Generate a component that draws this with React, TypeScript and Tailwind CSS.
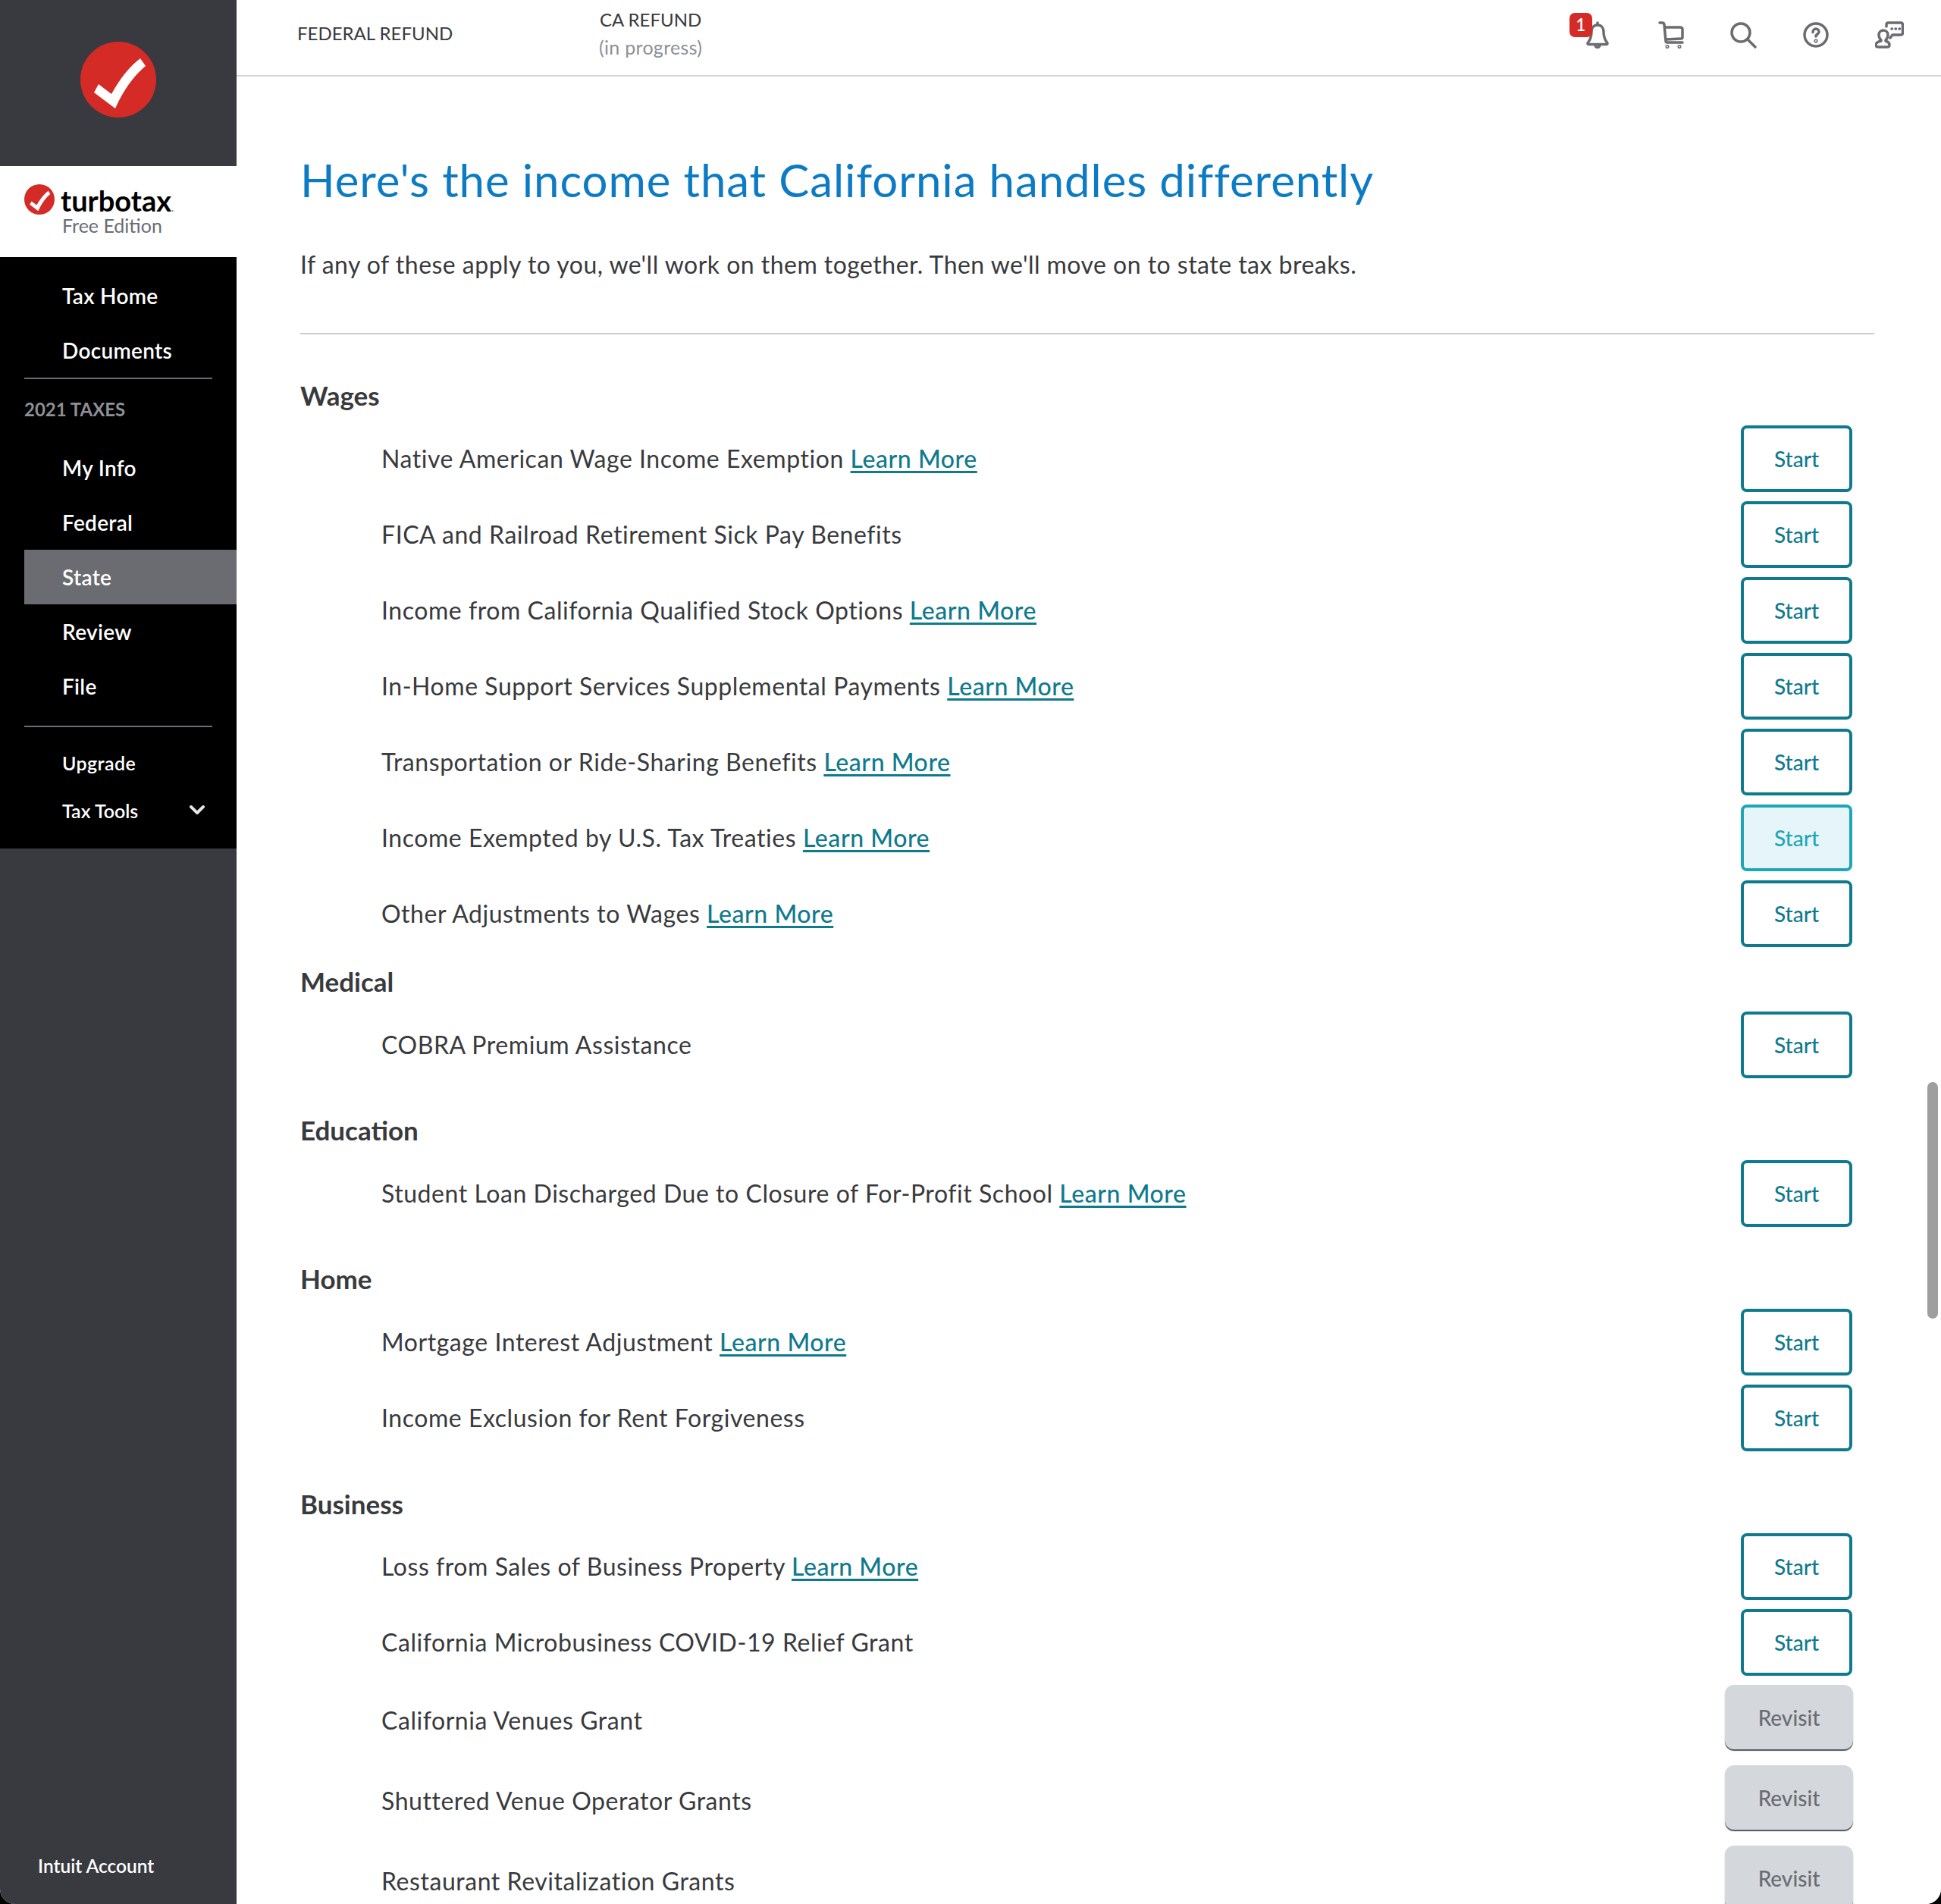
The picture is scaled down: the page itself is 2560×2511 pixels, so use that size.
import { ChevronDown } from 'lucide-react';

const font = "font-['Lato','Noto_Sans',sans-serif]";

type Row = { label: string; learn?: boolean; hover?: boolean; revisit?: boolean };

const sections: { title: string; top: string; gap: string; rows: Row[] }[] = [
  {
    title: 'Wages',
    top: 'mt-[61px]',
    gap: 'mt-[19px]',
    rows: [
      { label: 'Native American Wage Income Exemption', learn: true },
      { label: 'FICA and Railroad Retirement Sick Pay Benefits' },
      { label: 'Income from California Qualified Stock Options', learn: true },
      { label: 'In-Home Support Services Supplemental Payments', learn: true },
      { label: 'Transportation or Ride-Sharing Benefits', learn: true },
      { label: 'Income Exempted by U.S. Tax Treaties', learn: true, hover: true },
      { label: 'Other Adjustments to Wages', learn: true },
    ],
  },
  {
    title: 'Medical',
    top: 'mt-[26px]',
    gap: 'mt-[19px]',
    rows: [{ label: 'COBRA Premium Assistance' }],
  },
  {
    title: 'Education',
    top: 'mt-[49px]',
    gap: 'mt-[19px]',
    rows: [{ label: 'Student Loan Discharged Due to Closure of For-Profit School', learn: true }],
  },
  {
    title: 'Home',
    top: 'mt-[49px]',
    gap: 'mt-[19px]',
    rows: [
      { label: 'Mortgage Interest Adjustment', learn: true },
      { label: 'Income Exclusion for Rent Forgiveness' },
    ],
  },
  {
    title: 'Business',
    top: 'mt-[50px]',
    gap: 'mt-[18px]',
    rows: [
      { label: 'Loss from Sales of Business Property', learn: true },
      { label: 'California Microbusiness COVID-19 Relief Grant' },
      { label: 'California Venues Grant', revisit: true },
      { label: 'Shuttered Venue Operator Grants', revisit: true },
      { label: 'Restaurant Revitalization Grants', revisit: true },
    ],
  },
];

function NavItem({ label, active }: { label: string; active?: boolean }) {
  return (
    <div
      className={`h-[72px] ml-[32px] pl-[50px] flex items-center text-[28px] font-semibold tracking-[0.3px] text-white ${
        active ? 'bg-[#6b6c72]' : ''
      }`}
    >
      {label}
    </div>
  );
}

function Check({ className }: { className: string }) {
  return (
    <svg viewBox="0 0 100 100" className={className}>
      <circle cx="50" cy="50" r="50" fill="#d52b26" />
      <path d="M18 67 L24 56 L41 69 Q58 38 79 22 L86 32 Q62 52 46 88 Z" fill="#fff" />
    </svg>
  );
}

function Sidebar() {
  return (
    <aside className="w-[312px] shrink-0 flex flex-col bg-[#393a3f]">
      {/* Brand */}
      <div className="h-[219px] flex items-center justify-center pb-[9px]">
        <Check className="w-[100px] h-[100px]" />
      </div>
      <div className="h-[120px] bg-white pl-[32px] pt-[24px] flex">
        <Check className="w-[40px] h-[40px]" />
        <div className="ml-[8px]">
          <div className="text-[38px] leading-[42px] font-bold text-black">
            turbotax<span className="text-[#8d9096] text-[14px] leading-none">.</span>
          </div>
          <div className="ml-[2px] -mt-[3px] text-[25px] leading-[30px] text-[#6b6c72]">Free Edition</div>
        </div>
      </div>

      {/* Nav */}
      <nav className="h-[780px] bg-black pt-[15px]">
        <div className="[&>div]:ml-0 [&>div]:pl-[82px]">
          <NavItem label="Tax Home" />
          <NavItem label="Documents" />
        </div>
        <div className="mx-[32px] h-[2px] bg-[#6b6c72]" />
        <div className="ml-[32px] mt-[27px] h-[26px] leading-[26px] text-[24px] font-bold text-[#8d9096]">2021 TAXES</div>
        <div className="mt-[28px]">
          <NavItem label="My Info" />
          <NavItem label="Federal" />
          <NavItem label="State" active />
          <NavItem label="Review" />
          <NavItem label="File" />
        </div>
        <div className="mx-[32px] mt-[16px] h-[2px] bg-[#6b6c72]" />
        <div className="mt-[32px] ml-[82px] h-[30px] leading-[30px] text-[25px] font-semibold tracking-[0.4px] text-white">Upgrade</div>
        <div className="mt-[34px] ml-[82px] mr-[36px] h-[30px] flex items-center justify-between text-[25px] font-semibold text-white">
          Tax Tools
          <ChevronDown className="w-[32px] h-[32px] -mt-[4px] text-[#e5e5e5]" strokeWidth={3} />
        </div>
      </nav>

      <div className="flex-1 flex items-end pl-[50px] pb-[35px]">
        <span className="text-[24.500px] font-semibold text-white leading-[30px]">Intuit Account</span>
      </div>
    </aside>
  );
}

function Icons() {
  const stroke = {
    fill: 'none',
    stroke: '#6b6c72',
    strokeWidth: 3.5,
    strokeLinecap: 'round' as const,
    strokeLinejoin: 'round' as const,
  };
  return (
    <div className="flex items-center gap-[60px] mr-[49px] -mt-[7px]">
      <div className="relative w-[36px] h-[36px] flex justify-center">
        <svg viewBox="0 0 30 36" className="w-[30px] h-[36px]" {...stroke}>
          <path d="M15 2v3M15 5C10 5 7 9 7 14c0 7-2 11-4.500 14-1 1.500-.5 2.500 1 2.500h23c1.500 0 2-1 1-2.500C25 25 23 21 23 14c0-5-3-9-8-9Z" />
          <path d="M12 31c0 2 1.500 3.500 3 3.500s3-1.500 3-3.500" />
        </svg>
        <div className="absolute -left-[19px] -top-[11px] w-[30px] h-[32px] rounded-[7px] bg-[#d52b26] text-white text-[22px] leading-[32px] font-semibold text-center">
          1
        </div>
      </div>
      <svg viewBox="0 0 36 36" className="w-[36px] h-[36px]" {...stroke}>
        <path d="M4 2h3c2 0 3 1 3 3l2 21c0 1.500 1 2 2 2h20" />
        <path d="M11 8h20c2 0 3 1 3 3v10c0 1.500-1 2-2 2l-20 1" />
        <circle cx="14" cy="33.500" r="0.800" />
        <circle cx="30" cy="33.500" r="0.800" />
      </svg>
      <svg viewBox="0 0 36 36" className="w-[36px] h-[36px]" {...stroke}>
        <circle cx="15" cy="15" r="12" />
        <path d="M24 24l10 10" />
      </svg>
      <svg viewBox="0 0 36 36" className="w-[36px] h-[36px]" {...stroke}>
        <circle cx="18" cy="18" r="15" />
        <path d="M14 14.500c0-3 2-4.500 4-4.500s4 1.500 4 4c0 3-4 3-4 6" />
        <circle cx="18" cy="26" r="0.800" />
      </svg>
      <svg viewBox="0 0 38 36" className="w-[38px] h-[36px]" {...stroke}>
        <path d="M15 7V4.500C15 3 16 2 17.500 2H34c1.500 0 2.500 1 2.500 2.500v11c0 1.500-1 2.500-2.500 2.500H23l-3 4" />
        <path d="M22 10h.5M27 10h.5M32 10h.5" />
        <path d="M8 25c-2-2-3-4-3-7 0-4 3-6 6-6s6 2 6 6c0 3-1 5-3 7v1c3 1 5 2 5 5 0 2-1 3-3 3H4c-2 0-3-1-3-3 0-3 3-4 7-5Z" />
      </svg>
    </div>
  );
}

function Header() {
  return (
    <header className="h-[101px] shrink-0 border-b-2 border-[#d4d7dc] flex items-center justify-between bg-white">
      <div className="flex items-center text-[24px] text-[#393a3d] -mt-[11px]">
        <div className="ml-[80px] w-[201px] whitespace-nowrap">FEDERAL REFUND</div>
        <div className="ml-[197px] text-center leading-[36px]">
          <div>CA REFUND</div>
          <div className="text-[25px] tracking-[0.3px] text-[#8d9096]">(in progress)</div>
        </div>
      </div>
      <Icons />
    </header>
  );
}

function ItemRow({ row }: { row: Row }) {
  const button = row.revisit ? (
    <button className="self-start w-[169px] h-[85px] rounded-[12px] bg-[#d4d7dc] text-[#6b6c72] text-[28px] font-medium shadow-[0_2px_1px_#55565b] -mr-[1px]">
      Revisit
    </button>
  ) : (
    <button
      className={`w-[147px] h-[88px] rounded-[8px] border-4 text-[28px] font-medium ${
        row.hover ? 'border-[#1fa5b8] bg-[#e6f5f9] text-[#1fa5b8]' : 'border-[#0f7a8d] bg-white text-[#0f7a8d]'
      }`}
    >
      Start
    </button>
  );
  return (
    <div className={`flex items-center justify-between pl-[107px] pr-[29px] ${row.revisit ? 'h-[106px]' : 'h-[88px] mb-[12px]'}`}>
      <span className={`text-[32px] tracking-[0.55px] text-[#393a3d] whitespace-nowrap ${row.revisit ? '-mt-[12px]' : ''}`}>
        {row.label}{' '}
        {row.learn && <a className="text-[#0f7a8d] underline underline-offset-4 font-medium">Learn More</a>}
      </span>
      {button}
    </div>
  );
}

export default function App() {
  return (
    <div className="w-[2560px] h-[2511px] bg-black">
      <div className={`relative w-full h-full flex overflow-hidden rounded-b-[20px] bg-white ${font}`}>
        <Sidebar />
        <main className="flex-1 min-w-0 flex flex-col bg-white">
          <Header />
          <div className="pl-[84px] pr-[88px] overflow-hidden">
            <h1 className="mt-[100px] text-[60px] leading-[72px] tracking-[0.9px] text-[#0d7bc4] whitespace-nowrap">
              Here's the income that California handles differently
            </h1>
            <p className="mt-[56px] text-[32px] tracking-[0.47px] leading-[40px] text-[#393a3d]">
              If any of these apply to you, we'll work on them together. Then we'll move on to state tax breaks.
            </p>
            <hr className="mt-[70px] border-0 h-[2px] bg-[#cccccc]" />
            {sections.map((section) => (
              <section key={section.title}>
                <h2 className={`${section.top} text-[35px] leading-[40px] font-bold text-[#393a3d] -translate-y-px`}>{section.title}</h2>
                <div className={section.gap}>
                  {section.rows.map((row) => (
                    <ItemRow key={row.label} row={row} />
                  ))}
                </div>
              </section>
            ))}
          </div>
        </main>
        {/* overlay scrollbar */}
        <div className="absolute left-[2542px] top-[1427px] w-[14px] h-[312px] rounded-full bg-[#9e9e9e]" />
      </div>
    </div>
  );
}
